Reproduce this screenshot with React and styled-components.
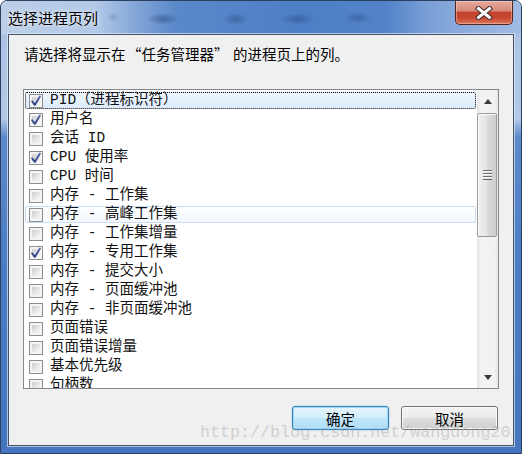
import React from "react";
import styled, { createGlobalStyle, css } from "styled-components";

const GlobalStyle = createGlobalStyle`
  html, body { margin: 0; padding: 0; background: #ffffff; }
  #root { width: 522px; height: 454px; }
`;

const CJK = `"Noto Sans CJK SC", "Noto Sans", sans-serif`;

const Window = styled.div`
  position: relative;
  box-sizing: border-box;
  width: 522px;
  height: 454px;
  display: flex;
  flex-direction: column;
  border: 1px solid #2b3f5e;
  border-radius: 7px 7px 0 0;
  overflow: hidden;
  background: linear-gradient(
    to bottom,
    #a9c1e5 0px,
    #b3c8e7 118px,
    #5b89ca 136px,
    #4a7bc4 60%,
    #4575bf 100%
  );
`;

const TitleBar = styled.div`
  flex: none;
  height: 33px;
  display: flex;
  align-items: flex-start;
  justify-content: space-between;
  padding: 0 8px 0 7px;
  background:
    radial-gradient(ellipse 16px 6px at 162px 18px, rgba(30, 55, 105, 0.45), transparent),
    radial-gradient(ellipse 13px 6px at 235px 18px, rgba(30, 55, 105, 0.4), transparent),
    radial-gradient(ellipse 17px 6px at 297px 18px, rgba(30, 55, 105, 0.4), transparent),
    radial-gradient(ellipse 14px 6px at 357px 17px, rgba(30, 55, 105, 0.35), transparent),
    radial-gradient(ellipse 6px 5px at 112px 16px, rgba(60, 90, 140, 0.25), transparent),
    linear-gradient(
      to right,
      #bccfe8 0px,
      #b2c8e7 95px,
      #88aada 130px,
      #5a88c9 175px,
      #4d7fc6 300px,
      #5283c8 385px,
      #7da1d7 430px,
      #a2bde4 521px
    );
`;

const TitleText = styled.span`
  font-family: ${CJK};
  font-size: 15px;
  line-height: 33px;
  color: #000;
  text-shadow: 0 0 6px rgba(255, 255, 255, 0.85), 0 0 2px rgba(255, 255, 255, 0.7);
`;

const CloseButton = styled.div`
  box-sizing: border-box;
  width: 58px;
  height: 24px;
  display: flex;
  align-items: center;
  justify-content: center;
  border: 1px solid #5a231d;
  border-top: none;
  border-radius: 0 0 5px 5px;
  background: linear-gradient(
    to bottom,
    #e6aa9d 0%,
    #d98a7a 42%,
    #c44330 50%,
    #c64632 72%,
    #dc7658 100%
  );
  box-shadow: inset 0 0 0 1px rgba(255, 215, 205, 0.45);
`;

const Frame = styled.div`
  flex: 1;
  display: flex;
  padding: 0 7px 7px;
`;

const Client = styled.div`
  flex: 1;
  display: flex;
  flex-direction: column;
  background: #f0f0f0;
  border: 1px solid #44536a;
  box-shadow: 0 0 0 1px rgba(232, 240, 250, 0.65);
  padding: 10px 14px 0 14px;
  font-family: ${CJK};
  color: #000;
`;

const Prompt = styled.div`
  font-size: 14.5px;
  line-height: 18px;
  height: 18px;
  padding-left: 1px;
  white-space: nowrap;
`;

const Quote = styled.span`
  display: inline-block;
  width: ${(p) => (p.$side === "open" ? 16 : 19)}px;
  text-align: ${(p) => (p.$side === "open" ? "right" : "left")};
`;

const ListBox = styled.div`
  box-sizing: border-box;
  margin-top: 26px;
  height: 300px;
  display: flex;
  border: 1px solid #828790;
  background: #ffffff;
`;

const Rows = styled.div`
  flex: 1;
  min-width: 0;
  display: flex;
  flex-direction: column;
  padding-top: 1px;
  overflow: hidden;
`;

const Row = styled.div`
  flex: none;
  box-sizing: border-box;
  height: 19px;
  padding: 1px;
  display: flex;
`;

const Item = styled.div`
  flex: 1;
  display: flex;
  align-items: center;
  gap: 7px;
  padding-left: 3px;
  border: 1px solid transparent;
  border-radius: 2px;
  ${(p) =>
    p.$state === "selected" &&
    css`
      border: 1px dotted #000;
      background: linear-gradient(to bottom, #f1f7fe, #dbeafc);
    `}
  ${(p) =>
    p.$state === "hover" &&
    css`
      border-color: #cbddf2;
      background: linear-gradient(to bottom, #fdfeff, #f4f8fd);
    `}
`;

const Box = styled.span`
  position: relative;
  flex: none;
  box-sizing: border-box;
  width: 14px;
  height: 14px;
  border: 1px solid #8e8f8f;
  padding: 2px;
  background: linear-gradient(135deg, #cdcdcd 0%, #e4e4e4 50%, #f7f7f7 100%) content-box,
    #f4f4f4;
`;

const Check = styled.svg`
  position: absolute;
  left: -1px;
  top: -1px;
`;

const ItemText = styled.span`
  font-family: "Liberation Mono", "Noto Sans CJK SC", monospace;
  font-size: 14.5px;
  line-height: 15px;
  white-space: pre;
  color: #111;
`;

const Scrollbar = styled.div`
  flex: none;
  width: 21px;
  display: flex;
  flex-direction: column;
  background: linear-gradient(to right, #e4e4e4 0%, #f2f2f2 18%, #f2f2f2 82%, #e8e8e8 100%);
`;

const ScrollButton = styled.div`
  flex: none;
  height: ${(p) => p.$h}px;
  display: flex;
  align-items: center;
  justify-content: center;
`;

const Arrow = styled.span`
  width: 0;
  height: 0;
  border-left: 4.5px solid transparent;
  border-right: 4.5px solid transparent;
  ${(p) =>
    p.$dir === "up"
      ? css`
          border-bottom: 5px solid #3a3a3a;
        `
      : css`
          border-top: 5px solid #3a3a3a;
        `}
`;

const Track = styled.div`
  flex: 1;
  display: flex;
  flex-direction: column;
`;

const Thumb = styled.div`
  box-sizing: border-box;
  margin: 1px 1px 0 0;
  height: 124px;
  display: flex;
  align-items: center;
  justify-content: center;
  border: 1px solid #9a9a9a;
  border-radius: 2px;
  background: linear-gradient(to right, #efefef 0%, #e5e5e5 45%, #d9d9d9 55%, #cecece 100%);
  box-shadow: inset 1px 1px 0 #fbfbfb;
`;

const Grip = styled.span`
  width: 9px;
  height: 10px;
  background: repeating-linear-gradient(
    to bottom,
    #6a6a6a 0px,
    #6a6a6a 1px,
    #fafafa 1px,
    #fafafa 2px,
    transparent 2px,
    transparent 3px
  );
`;

const ButtonRow = styled.div`
  display: flex;
  justify-content: flex-end;
  gap: 12px;
  margin-top: 17px;
  padding-right: 1px;
`;

const DialogButton = styled.div`
  box-sizing: border-box;
  width: 97px;
  height: 24px;
  display: flex;
  align-items: center;
  justify-content: center;
  font-size: 14.5px;
  color: #000;
  border-radius: 3px;
  ${(p) =>
    p.$default
      ? css`
          border: 1px solid #3c7fb1;
          background: linear-gradient(to bottom, #e6f5fd 0%, #d2eefc 48%, #bfe6fa 52%, #b0def6 100%);
          box-shadow: inset 0 0 0 1px rgba(150, 215, 250, 0.9), 0 0 2px rgba(80, 170, 240, 0.6);
        `
      : css`
          border: 1px solid #707070;
          background: linear-gradient(to bottom, #f3f3f3 0%, #ebebeb 48%, #dddddd 52%, #cfcfcf 100%);
          box-shadow: inset 0 0 0 1px #fbfbfb;
        `}
`;

const Watermark = styled.div`
  position: absolute;
  left: 199px;
  top: 424px;
  font-family: "Liberation Mono", monospace;
  font-size: 16.7px;
  line-height: 16.7px;
  color: rgba(150, 150, 150, 0.38);
  white-space: pre;
  pointer-events: none;
`;

const items = [
  { label: "PID（进程标识符）", checked: true, state: "selected" },
  { label: "用户名", checked: true },
  { label: "会话 ID" },
  { label: "CPU 使用率", checked: true },
  { label: "CPU 时间" },
  { label: "内存 - 工作集" },
  { label: "内存 - 高峰工作集", state: "hover" },
  { label: "内存 - 工作集增量" },
  { label: "内存 - 专用工作集", checked: true },
  { label: "内存 - 提交大小" },
  { label: "内存 - 页面缓冲池" },
  { label: "内存 - 非页面缓冲池" },
  { label: "页面错误" },
  { label: "页面错误增量" },
  { label: "基本优先级" },
  { label: "句柄数" },
];

function CheckBox({ checked }) {
  return (
    <Box>
      {checked && (
        <Check width="14" height="14" viewBox="0 0 14 14">
          <defs>
            <linearGradient id="ck" x1="0" y1="0" x2="0" y2="1">
              <stop offset="0" stopColor="#5b6fae" />
              <stop offset="1" stopColor="#2c3f86" />
            </linearGradient>
          </defs>
          <path
            d="M3.2 7.4 L5.9 10.8 L10.9 2.6"
            fill="none"
            stroke="url(#ck)"
            strokeWidth="2"
            strokeLinecap="round"
            strokeLinejoin="round"
          />
        </Check>
      )}
    </Box>
  );
}

function CloseGlyph() {
  return (
    <svg width="18" height="14" viewBox="0 0 18 14">
      <path d="M3.5 2.5 L14.5 11.5 M14.5 2.5 L3.5 11.5" stroke="#3b2a28" strokeWidth="5" strokeLinecap="square" />
      <path d="M3.5 2.5 L14.5 11.5 M14.5 2.5 L3.5 11.5" stroke="#ffffff" strokeWidth="3" strokeLinecap="square" />
    </svg>
  );
}

export default function App() {
  return (
    <>
      <GlobalStyle />
      <Window>
        <TitleBar>
          <TitleText>选择进程页列</TitleText>
          <CloseButton>
            <CloseGlyph />
          </CloseButton>
        </TitleBar>
        <Frame>
          <Client>
            <Prompt>
              {"请选择将显示在"}
              <Quote $side="open">“</Quote>
              {"任务管理器"}
              <Quote $side="close">”</Quote>
              {"的进程页上的列。"}
            </Prompt>
            <ListBox>
              <Rows>
                {items.map((it) => (
                  <Row key={it.label}>
                    <Item $state={it.state}>
                      <CheckBox checked={it.checked} />
                      <ItemText>{it.label}</ItemText>
                    </Item>
                  </Row>
                ))}
              </Rows>
              <Scrollbar>
                <ScrollButton $h={22}>
                  <Arrow $dir="up" />
                </ScrollButton>
                <Track>
                  <Thumb>
                    <Grip />
                  </Thumb>
                </Track>
                <ScrollButton $h={21}>
                  <Arrow $dir="down" />
                </ScrollButton>
              </Scrollbar>
            </ListBox>
            <ButtonRow>
              <DialogButton $default>确定</DialogButton>
              <DialogButton>取消</DialogButton>
            </ButtonRow>
          </Client>
        </Frame>
        <Watermark>http://blog.csdn.net/wangdong20</Watermark>
      </Window>
    </>
  );
}
